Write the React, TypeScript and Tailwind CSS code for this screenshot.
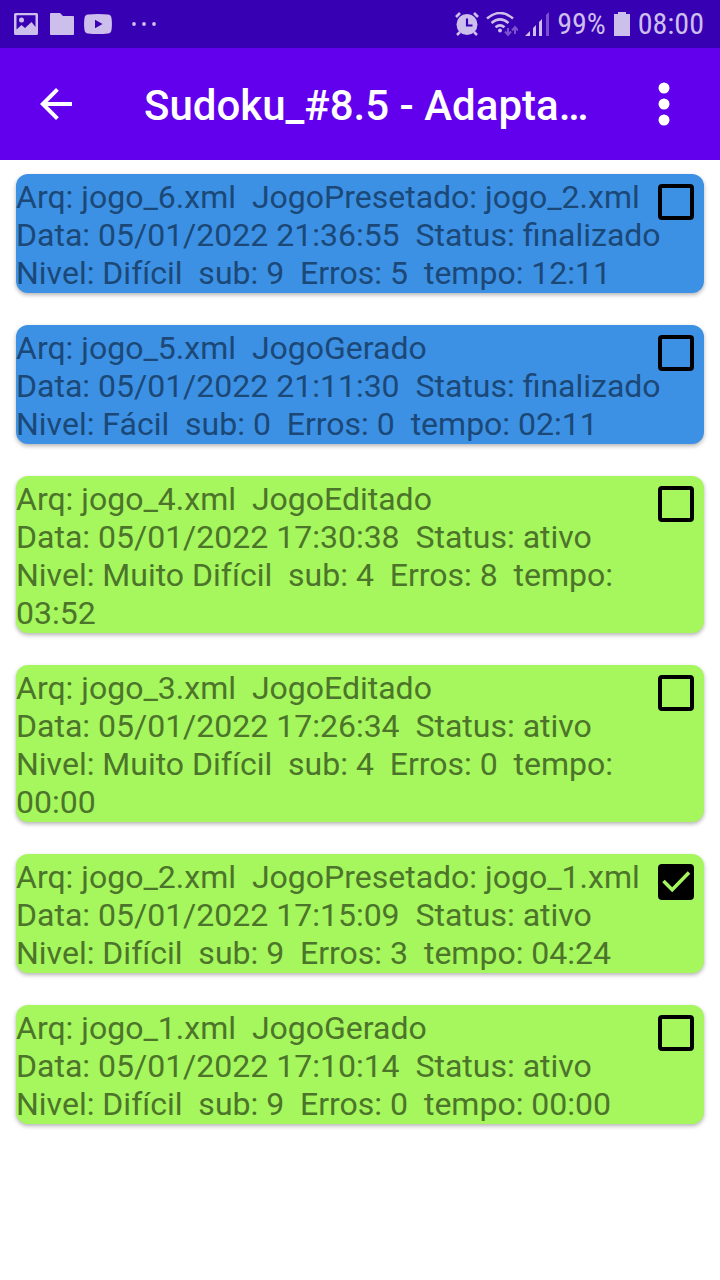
import { useState } from "react";

type Game = { id: string; lines: string[]; finished: boolean; checked: boolean };

const games: Game[] = [
  {
    id: "jogo_6",
    lines: [
      "Arq: jogo_6.xml  JogoPresetado: jogo_2.xml",
      "Data: 05/01/2022 21:36:55  Status: finalizado",
      "Nivel: Difícil  sub: 9  Erros: 5  tempo: 12:11",
    ],
    finished: true,
    checked: false,
  },
  {
    id: "jogo_5",
    lines: [
      "Arq: jogo_5.xml  JogoGerado",
      "Data: 05/01/2022 21:11:30  Status: finalizado",
      "Nivel: Fácil  sub: 0  Erros: 0  tempo: 02:11",
    ],
    finished: true,
    checked: false,
  },
  {
    id: "jogo_4",
    lines: [
      "Arq: jogo_4.xml  JogoEditado",
      "Data: 05/01/2022 17:30:38  Status: ativo",
      "Nivel: Muito Difícil  sub: 4  Erros: 8  tempo: 03:52",
    ],
    finished: false,
    checked: false,
  },
  {
    id: "jogo_3",
    lines: [
      "Arq: jogo_3.xml  JogoEditado",
      "Data: 05/01/2022 17:26:34  Status: ativo",
      "Nivel: Muito Difícil  sub: 4  Erros: 0  tempo: 00:00",
    ],
    finished: false,
    checked: false,
  },
  {
    id: "jogo_2",
    lines: [
      "Arq: jogo_2.xml  JogoPresetado: jogo_1.xml",
      "Data: 05/01/2022 17:15:09  Status: ativo",
      "Nivel: Difícil  sub: 9  Erros: 3  tempo: 04:24",
    ],
    finished: false,
    checked: true,
  },
  {
    id: "jogo_1",
    lines: [
      "Arq: jogo_1.xml  JogoGerado",
      "Data: 05/01/2022 17:10:14  Status: ativo",
      "Nivel: Difícil  sub: 9  Erros: 0  tempo: 00:00",
    ],
    finished: false,
    checked: false,
  },
];

function StatusBar() {
  return (
    <div className="flex h-12 items-center justify-between bg-[#3700b3] pr-4 pl-[14px] text-[#cdbfec]">
      <div className="flex items-center gap-3">
        <svg width="24" height="22" viewBox="0 0 24 22" fill="currentColor" aria-hidden="true">
          <path
            fillRule="evenodd"
            d="M1.500 0h21A1.500 1.500 0 0 1 24 1.500v19a1.500 1.500 0 0 1-1.500 1.500h-21A1.500 1.500 0 0 1 0 20.500v-19A1.500 1.500 0 0 1 1.500 0zM2.500 2.300v14.200L7.500 12l3.500 3 6.500-6 4 5V2.300z"
          />
          <circle cx="7.500" cy="7" r="2.500" />
        </svg>
        <svg width="24" height="22" viewBox="0 0 24 22" fill="currentColor" aria-hidden="true">
          <path d="M1 0h9l3 3h10a1 1 0 0 1 1 1v17a1 1 0 0 1-1 1H1a1 1 0 0 1-1-1V1a1 1 0 0 1 1-1z" />
        </svg>
        <svg className="-ml-[2px]" width="28" height="20" viewBox="0 0 28 20" fill="currentColor" aria-hidden="true">
          <path
            fillRule="evenodd"
            d="M4 .500Q14-.500 24 .500q3 .300 3.500 3.500.900 6 0 12-.500 3.200-3.500 3.500-10 1-20 0Q1 19.200.500 16q-.900-6 0-12Q1 .800 4 .500zM11 5.700v8.600l7.500-4.300z"
          />
        </svg>
        <svg className="ml-2" width="24" height="4" viewBox="0 0 24 4" fill="currentColor" aria-hidden="true">
          <circle cx="2" cy="2" r="1.900" />
          <circle cx="12" cy="2" r="1.900" />
          <circle cx="22" cy="2" r="1.900" />
        </svg>
      </div>
      <div className="flex items-center gap-2 font-['Roboto_Condensed',Roboto,sans-serif] text-[30px] leading-8">
        <svg width="24" height="24" viewBox="0 0 24 24" aria-hidden="true">
          <circle cx="12" cy="12.500" r="10.500" fill="currentColor" />
          <path d="M1 5l4-4M19 1l4 4M5 20l-3 3M19 20l3 3" stroke="currentColor" strokeWidth="2.600" fill="none" />
          <path d="M12 6.500v7h5.500" stroke="#3700b3" strokeWidth="2.200" fill="none" />
        </svg>
        <svg className="-mx-px" width="32" height="24" viewBox="0 0 32 24" fill="none" stroke="currentColor" aria-hidden="true">
          <path d="M1 6.500Q14-4.500 27 6.500M5.500 11q8.500-7.300 17 0M9.500 15.300q4.500-3.800 9 0" strokeWidth="2.500" />
          <circle cx="14" cy="18.500" r="2" fill="currentColor" stroke="none" />
          <g stroke="#7a52cf" strokeWidth="2">
            <path d="M22 16v7M19 19.500l3 3.500 3-3.500M29 22v-7M26 18.500l3-3.500 3 3.500" />
          </g>
        </svg>
        <svg width="24" height="24" viewBox="0 0 24 24" fill="currentColor" aria-hidden="true">
          <path d="M0 24l5-5v5zM8 24v-8l3-3v11zM14 24V10l3-3v17z" />
          <path d="M21 24V3l3-3v24z" fill="#7a52cf" />
        </svg>
        <span>99%</span>
        <svg width="16" height="24" viewBox="0 0 16 24" fill="currentColor" aria-hidden="true">
          <path d="M4 0h8v2h4v22H0V2h4z" />
        </svg>
        <span>08:00</span>
      </div>
    </div>
  );
}

function AppBar() {
  return (
    <header className="flex h-28 items-center bg-[#6200ee] text-white">
      <button type="button" aria-label="Voltar" className="flex size-28 shrink-0 items-center justify-center">
        <svg width="48" height="48" viewBox="0 0 24 24" fill="currentColor" aria-hidden="true">
          <path d="M20 11H7.830l5.590-5.590L12 4l-8 8 8 8 1.410-1.410L7.830 13H20v-2z" />
        </svg>
      </button>
      <h1 className="ml-8 min-w-0 flex-1 truncate pt-1 text-[42px] leading-[50px] font-medium">Sudoku_#8.5 - Adapta…</h1>
      <button type="button" aria-label="Mais opções" className="flex size-28 shrink-0 items-center justify-center">
        <svg width="12" height="44" viewBox="0 0 12 44" fill="currentColor" aria-hidden="true">
          <circle cx="6" cy="6" r="5.500" />
          <circle cx="6" cy="22" r="5.500" />
          <circle cx="6" cy="38" r="5.500" />
        </svg>
      </button>
    </header>
  );
}

function GameCard({ game }: { game: Game }) {
  const [checked, setChecked] = useState(game.checked);
  const tone = game.finished ? "bg-[#3c91e4] text-[#1b4877]" : "bg-[#a5f75d] text-[#4c742a]";
  return (
    <li className={`relative rounded-[12px] pt-1 pb-px shadow-[0_2px_4px_rgba(0,0,0,0.3)] ${tone}`}>
      <label htmlFor={game.id} className="block pr-2 text-[32px] leading-[38px]">
        {game.lines.map((line) => (
          <span key={line} className="block whitespace-pre-wrap">
            {line}
          </span>
        ))}
      </label>
      <div className="absolute top-[10px] right-[10px] size-9">
        <input
          id={game.id}
          type="checkbox"
          checked={checked}
          onChange={(e) => setChecked(e.target.checked)}
          className="block size-9 appearance-none rounded-[4px] border-4 border-black checked:bg-black"
        />
        {checked && (
          <svg
            className="pointer-events-none absolute inset-0"
            width="36"
            height="36"
            viewBox="0 0 36 36"
            fill="none"
            stroke="#a5f75d"
            strokeWidth="3.500"
            aria-hidden="true"
          >
            <path d="M5.500 17l8.700 8.700L31 8.500" />
          </svg>
        )}
      </div>
    </li>
  );
}

export default function App() {
  return (
    <div className="min-h-screen bg-white font-[Roboto,sans-serif]">
      <StatusBar />
      <AppBar />
      <main className="px-4 pt-[14px] pb-8">
        <ul className="flex flex-col gap-8">
          {games.map((game) => (
            <GameCard key={game.id} game={game} />
          ))}
        </ul>
      </main>
    </div>
  );
}
